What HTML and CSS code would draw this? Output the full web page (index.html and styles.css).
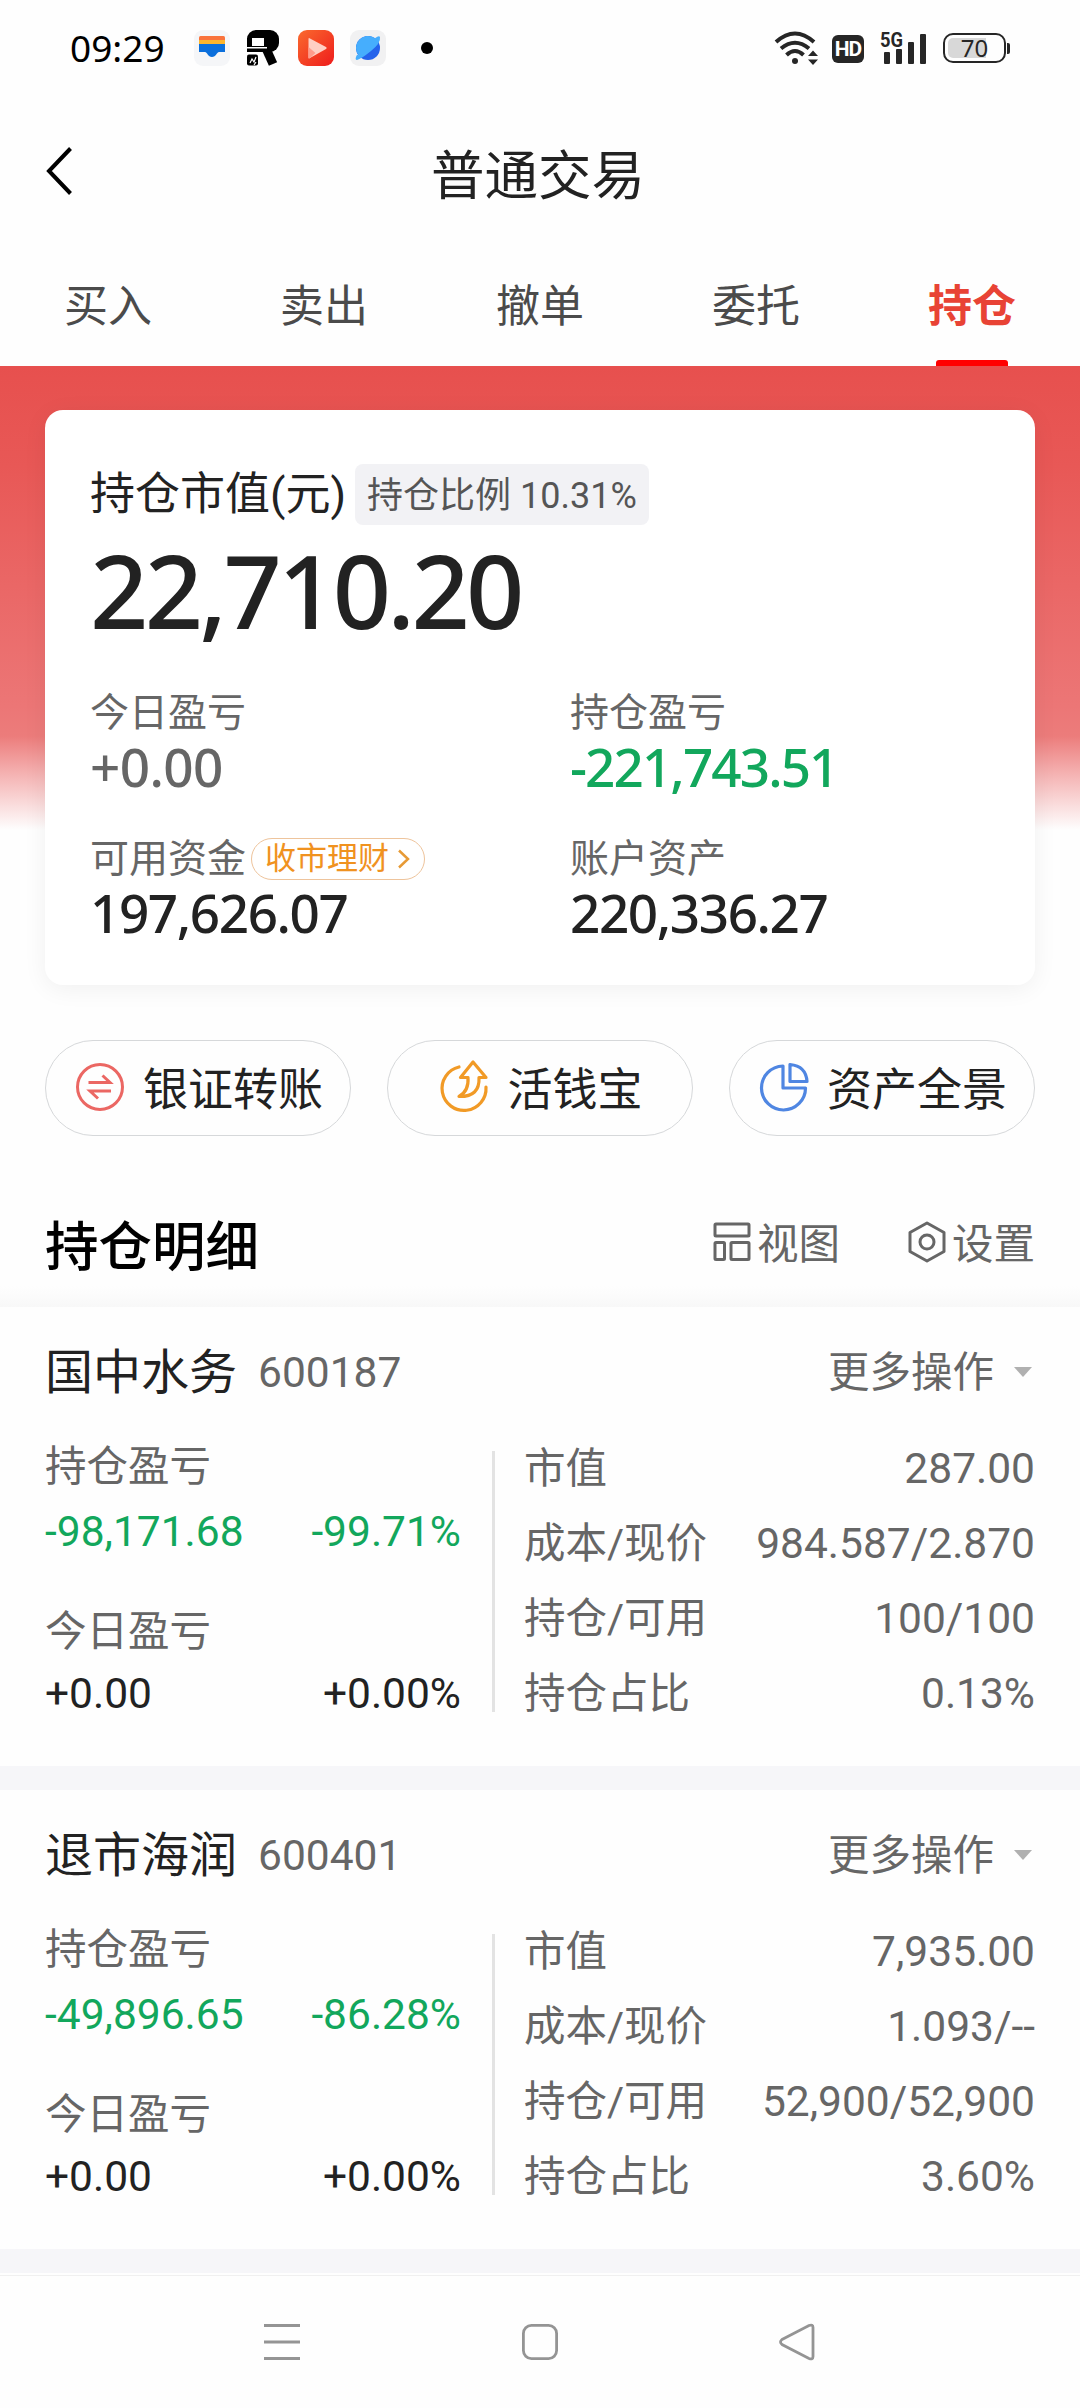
FILE: index.html
```html
<!DOCTYPE html>
<html lang="zh-CN">
<head>
  <meta charset="UTF-8" />
  <meta name="viewport" content="width=device-width, initial-scale=1">
  <title>普通交易</title>
  <link rel="stylesheet" href="styles.css">
</head>
<body>

  <div class="status-bar">
    <span class="clock">09:29</span>
    <div class="status-apps">
      <svg width="36" height="36" viewBox="0 0 36 36">
        <rect width="36" height="36" rx="9" fill="#f5f6f8"/>
        <rect x="5" y="6" width="26" height="8" rx="1.5" fill="#f9733c"/>
        <rect x="5" y="10" width="26" height="7" fill="#fdb52c"/>
        <path d="M5 14h26v8h-6c-2 0-3 5-7 5s-5-5-7-5H5z" fill="#0b6fdc"/>
      </svg>
      <svg class="app-r" width="34" height="36" viewBox="0 0 34 36">
        <rect x="1" y="0" width="32" height="22" rx="9" fill="#000"/>
        <rect x="1" y="8" width="14" height="14" fill="#000"/>
        <line x1="18" y1="14" x2="27" y2="34" stroke="#000" stroke-width="9" stroke-linecap="butt"/>
        <rect x="6" y="8" width="12" height="8" fill="#fff"/>
        <rect x="1" y="17" width="20" height="1.500" fill="#fff"/>
        <rect x="0" y="22" width="15" height="2.500" fill="#fff"/>
        <rect x="1" y="24.500" width="11" height="11" rx="2" fill="#000"/>
        <path d="M4 33l2-4 2 3 2-5M8 35l2-3" stroke="#fff" stroke-width="1.200" fill="none"/>
      </svg>
      <svg width="36" height="36" viewBox="0 0 36 36">
        <defs>
          <linearGradient id="video" x1="0" y1="0" x2="1" y2="1">
            <stop offset="0" stop-color="#fa6a2e"/>
            <stop offset="1" stop-color="#ee1c1c"/>
          </linearGradient>
        </defs>
        <rect width="36" height="36" rx="9" fill="url(#video)"/>
        <path d="M10.500 9q0-1.500 1.500-.5L28 17q1.500 1 0 2L12 28q-1.500 1-1.500-.5z" fill="#ffcfc4"/>
        <path d="M10.500 17l7 6-5.500 5q-1.500 1-1.500-.5z" fill="#ff9c8c"/>
      </svg>
      <svg width="36" height="36" viewBox="0 0 36 36">
        <rect width="36" height="36" rx="9" fill="#f1f1f2"/>
        <circle cx="18" cy="18" r="12" fill="#2563eb"/>
        <path d="M9 26A12 12 0 0 1 25 8.300Q29 5 30 7q1 6-9 14T7 30q-2 0-1-3 1-3 2-2z" fill="#46aefd"/>
      </svg>
      <i class="more-dot"></i>
    </div>
    <div class="status-right">
      <svg class="wifi" width="46" height="34" viewBox="0 0 46 34">
        <g fill="none" stroke="#262626" stroke-width="4">
          <path d="M2 11Q21-6 40 11"/>
          <path d="M7 17.500Q21 6 35 17.500"/>
          <path d="M12.500 24Q21 16 29.500 24"/>
        </g>
        <circle cx="21" cy="30" r="3" fill="#262626"/>
        <path d="M34 25l5-5.500 5 5.500zM34 28.500h10L39 34z" fill="#262626"/>
      </svg>
      <span class="hd">HD</span>
      <svg class="signal" width="50" height="34" viewBox="0 0 50 34">
        <text x="1" y="16" textLength="23" lengthAdjust="spacingAndGlyphs">5G</text>
        <rect x="5" y="21" width="6" height="12" rx="1"/>
        <rect x="17" y="18" width="6" height="15" rx="1"/>
        <rect x="29" y="11" width="6" height="22" rx="1"/>
        <rect x="41" y="3" width="6" height="30" rx="1"/>
      </svg>
      <span class="battery">70</span>
      <i class="battery-tip"></i>
    </div>
  </div>

  <div class="header">
    <svg class="back" width="30" height="50" viewBox="0 0 30 50">
      <path d="M25.500 2.500L4 25l21.500 22.500" fill="none" stroke="#000" stroke-width="4"/>
    </svg>
    <h1>普通交易</h1>
  </div>

  <div class="tabs">
    <div class="tab">买入</div>
    <div class="tab">卖出</div>
    <div class="tab">撤单</div>
    <div class="tab">委托</div>
    <div class="tab active">持仓</div>
  </div>

  <div class="hero">
    <div class="card">
      <div class="card-title">
        <span>持仓市值(元)</span>
        <span class="ratio">持仓比例 10.31%</span>
      </div>
      <div class="total">22,710.20</div>
      <div class="stats">
        <div class="stat">
          <div class="stat-label">今日盈亏</div>
          <div class="stat-value gray">+0.00</div>
        </div>
        <div class="stat">
          <div class="stat-label">持仓盈亏</div>
          <div class="stat-value green">-221,743.51</div>
        </div>
        <div class="stat">
          <div class="stat-label">可用资金
            <span class="tag">收市理财
              <svg width="14" height="20" viewBox="0 0 14 20">
                <path d="M2 1.500l9 8.500-9 8.500" fill="none" stroke="#e79a35" stroke-width="2.500"/>
              </svg>
            </span>
          </div>
          <div class="stat-value">197,626.07</div>
        </div>
        <div class="stat">
          <div class="stat-label">账户资产</div>
          <div class="stat-value">220,336.27</div>
        </div>
      </div>
    </div>
  </div>

  <div class="actions">
    <div class="action">
      <svg width="50" height="54" viewBox="0 0 50 54" fill="none" stroke="#eb6763" stroke-width="3">
        <circle cx="25" cy="27" r="22.500"/>
        <path d="M13.500 22.500H35l-7.500-7M36 31H15l8 7.500"/>
      </svg>
      <span>银证转账</span>
    </div>
    <div class="action">
      <svg width="50" height="54" viewBox="0 0 50 54" fill="none" stroke="#f19a26" stroke-width="3.200" stroke-linejoin="round" stroke-linecap="round">
        <path d="M20 7A22 22 0 1 0 47 27"/>
        <path d="M34 2L21.500 17.500H29Q30 31 20 36.500 41 37 40 17.500h7z"/>
      </svg>
      <span>活钱宝</span>
    </div>
    <div class="action">
      <svg width="50" height="54" viewBox="0 0 50 54" fill="none" stroke="#4f86e2" stroke-width="3.200" stroke-linejoin="round">
        <path d="M24 6A22 22 0 1 0 46.500 28H24z"/>
        <path d="M31 4.500V21.500H48Q47 6 31 4.500z"/>
      </svg>
      <span>资产全景</span>
    </div>
  </div>

  <div class="section-head">
    <h2>持仓明细</h2>
    <div class="tool">
      <svg width="38" height="40" viewBox="0 0 38 40" fill="none" stroke="#666" stroke-width="3">
        <rect x="2" y="2" width="34" height="12" rx="1"/>
        <rect x="2" y="20.500" width="9.500" height="17" rx="1"/>
        <rect x="18" y="20.500" width="18" height="17" rx="1"/>
      </svg>
      <span>视图</span>
    </div>
    <div class="tool">
      <svg width="38" height="42" viewBox="0 0 38 42" fill="none" stroke="#666" stroke-width="3" stroke-linejoin="round">
        <path d="M19 2L36 11.500v19L19 40 2 30.500v-19z"/>
        <circle cx="19" cy="21" r="7"/>
      </svg>
      <span>设置</span>
    </div>
  </div>

  <div class="holding">
    <div class="holding-head">
      <span class="name">国中水务</span>
      <span class="code">600187</span>
      <span class="more">更多操作</span>
      <i class="caret"></i>
    </div>
    <div class="holding-body">
      <div class="profit">
        <div class="line">持仓盈亏</div>
        <div class="line nums green"><span>-98,171.68</span><span>-99.71%</span></div>
        <div class="line today">今日盈亏</div>
        <div class="line nums dark"><span>+0.00</span><span>+0.00%</span></div>
      </div>
      <div class="detail">
        <div class="line"><span>市值</span><span>287.00</span></div>
        <div class="line"><span>成本/现价</span><span>984.587/2.870</span></div>
        <div class="line"><span>持仓/可用</span><span>100/100</span></div>
        <div class="line"><span>持仓占比</span><span>0.13%</span></div>
      </div>
    </div>
  </div>

  <div class="holding">
    <div class="holding-head">
      <span class="name">退市海润</span>
      <span class="code">600401</span>
      <span class="more">更多操作</span>
      <i class="caret"></i>
    </div>
    <div class="holding-body">
      <div class="profit">
        <div class="line">持仓盈亏</div>
        <div class="line nums green"><span>-49,896.65</span><span>-86.28%</span></div>
        <div class="line today">今日盈亏</div>
        <div class="line nums dark"><span>+0.00</span><span>+0.00%</span></div>
      </div>
      <div class="detail">
        <div class="line"><span>市值</span><span>7,935.00</span></div>
        <div class="line"><span>成本/现价</span><span>1.093/--</span></div>
        <div class="line"><span>持仓/可用</span><span>52,900/52,900</span></div>
        <div class="line"><span>持仓占比</span><span>3.60%</span></div>
      </div>
    </div>
  </div>

  <div class="nav-bar">
    <svg width="40" height="40" viewBox="0 0 40 40" fill="none" stroke="#949494" stroke-width="3">
      <path d="M2 3.500h36M2 20h36M2 36.500h36"/>
    </svg>
    <svg width="40" height="40" viewBox="0 0 40 40" fill="none" stroke="#949494" stroke-width="2.800">
      <rect x="3.400" y="3.400" width="33.200" height="33.200" rx="8"/>
    </svg>
    <svg width="40" height="40" viewBox="0 0 40 40" fill="none" stroke="#949494" stroke-width="2.800">
      <path d="M4 17.500L31 3.500q4-1.500 4 2v29q0 3.500-4 2L4 22.500q-3-2.500 0-5z"/>
    </svg>
  </div>

</body>
</html>
```

FILE: styles.css
```css
html, body {
  margin: 0;
  padding: 0;
}

body {
  width: 1080px;
  height: 2408px;
  overflow: hidden;
  background: #fefefe;
  color: #222;
  font-family: Roboto, "Noto Sans CJK SC", sans-serif;
}

svg {
  display: block;
  flex: none;
  overflow: visible;
}

h1, h2 {
  margin: 0;
}

/* status bar */

.status-bar {
  display: flex;
  align-items: center;
  height: 96px;
  padding-left: 70px;
  padding-right: 70px;
}

.clock {
  width: 124px;
  font-family: "Noto Sans", sans-serif;
  font-size: 37px;
  line-height: 44px;
  color: #000;
}

.status-apps {
  display: flex;
  align-items: center;
  gap: 16px;
}

.app-r {
  margin-right: 2px;
}

.more-dot {
  width: 12px;
  height: 12px;
  margin-left: 19px;
  border-radius: 50%;
  background: #000;
}

.status-right {
  display: flex;
  align-items: center;
  margin-left: auto;
  color: #262626;
}

.wifi {
  margin-right: 12px;
}

.hd {
  width: 32px;
  height: 28px;
  margin-right: 15px;
  border-radius: 6px;
  background: #262626;
  color: #fff;
  font-size: 21px;
  font-weight: bold;
  line-height: 29px;
  text-align: center;
  letter-spacing: -1px;
  margin-top: 2px;
}

.signal {
  margin-right: 14px;
  fill: #262626;
  font-size: 21px;
  font-weight: bold;
}

.battery {
  box-sizing: border-box;
  width: 63px;
  height: 30px;
  border: 2px solid #262626;
  border-radius: 10px;
  background: linear-gradient(90deg, #d8d8d8 38px, #fefefe 38px) content-box;
  padding: 3px;
  font-family: "Noto Sans", sans-serif;
  font-size: 24px;
  line-height: 20px;
  text-align: center;
}

.battery-tip {
  width: 3px;
  height: 11px;
  margin-left: 1px;
  background: #262626;
  border-radius: 0 2px 2px 0;
}

/* page header */

.header {
  display: flex;
  align-items: center;
  height: 150px;
}

.back {
  margin-left: 45px;
}

.header h1 {
  flex: 1;
  margin: 11px 79px 0 0;
  font-size: 53.5px;
  font-weight: 400;
  line-height: 64px;
  text-align: center;
}

.tabs {
  display: flex;
  height: 120px;
}

.tab {
  display: flex;
  flex-direction: column;
  align-items: center;
  justify-content: space-between;
  flex: 1;
  padding-top: 8px;
  font-size: 44px;
  line-height: 106px;
  color: #4b4b4b;
}

.tab.active {
  color: #e84335;
  font-weight: 600;
}

.tab.active::after {
  content: "";
  width: 72px;
  height: 6px;
  border-radius: 3px 3px 0 0;
  background: #f00;
}

/* summary card */

.hero {
  padding: 44px 45px 55px;
  background: linear-gradient(#e7504e, #e85856 100px, #ec7676 340px, #ec7c7b 370px, #f5b5b5 410px, #fefefe 464px);
}

.card {
  box-sizing: border-box;
  height: 575px;
  padding: 54px 45px 0;
  border-radius: 18px;
  background: #fff;
  box-shadow: 0 4px 24px rgba(0, 0, 0, 0.06);
}

.card-title {
  display: flex;
  align-items: center;
  gap: 9px;
  height: 61px;
  font-size: 45px;
}

.card-title span {
  line-height: 67px;
  white-space: nowrap;
}

.card-title .ratio {
  height: 61px;
  padding: 0 12px;
  border-radius: 8px;
  background: #f2f2f5;
  color: #555;
  font-size: 36px;
  line-height: 65px;
}

.total {
  margin-top: 10px;
  font-family: "Noto Sans", sans-serif;
  font-size: 102px;
  font-weight: 500;
  line-height: 110px;
  letter-spacing: -3.7px;
}

.stats {
  display: grid;
  grid-template-columns: 480px 1fr;
  row-gap: 42px;
  margin-top: 46px;
}

.stat-label {
  display: flex;
  align-items: center;
  height: 44px;
  color: #666;
  font-size: 39px;
  line-height: 44px;
}

.stat-value {
  margin-top: 4px;
  font-family: "Noto Sans", sans-serif;
  font-size: 53px;
  font-weight: 500;
  line-height: 56px;
  letter-spacing: -1.4px;
}

.stat-value.gray {
  color: #666;
  letter-spacing: -0.6px;
}

.stat-value.green {
  color: #12a75c;
  letter-spacing: -1.9px;
}

.tag {
  display: flex;
  align-items: center;
  gap: 8px;
  box-sizing: border-box;
  width: 174px;
  height: 42px;
  margin-left: 5px;
  padding-left: 13px;
  border: 1px solid #eec49c;
  border-radius: 21px;
  color: #f0921f;
  font-size: 31px;
  line-height: 40px;
}

/* quick actions */

.actions {
  display: flex;
  gap: 36px;
  padding: 0 45px;
}

.action {
  display: flex;
  align-items: center;
  justify-content: center;
  gap: 18px;
  flex: 1;
  box-sizing: border-box;
  height: 96px;
  padding-left: 2px;
  border: 1px solid #d6d8da;
  border-radius: 48px;
  font-size: 45px;
  line-height: 60px;
  white-space: nowrap;
}

.action svg {
  margin-top: -3px;
}

.action span {
  padding-top: 5px;
}

/* holdings */

.section-head {
  display: flex;
  align-items: center;
  box-sizing: border-box;
  height: 171px;
  padding: 41px 45px 0;
  background: linear-gradient(#fefefe 150px, #f8f8f8 171px);
}

.section-head h2 {
  margin-right: auto;
  color: #000;
  font-size: 53.5px;
  font-weight: 500;
}

.tool {
  display: flex;
  align-items: center;
  gap: 6px;
  margin-left: 68px;
  color: #666;
  font-size: 41.5px;
}

.tool span {
  margin-top: -2px;
}

.holding {
  box-sizing: border-box;
  height: 483px;
  padding: 35px 45px 0;
  border-bottom: 24px solid #f6f6f9;
  color: #666;
  font-size: 41.5px;
}

.holding-head {
  display: flex;
  align-items: center;
  height: 60px;
  line-height: 61px;
}

.name {
  color: #222;
  font-size: 48px;
}

.code {
  margin-left: 21px;
  font-size: 42.5px;
}

.more {
  margin-left: auto;
}

.caret {
  margin: 0 3px 0 20px;
  border: 9px solid transparent;
  border-top: 10px solid #b0b0b0;
  border-bottom: 0;
}

.holding-body {
  display: flex;
  margin-top: 40px;
}

.line {
  display: flex;
  justify-content: space-between;
  height: 50px;
  line-height: 50px;
}

.profit {
  width: 416px;
}

.profit .nums {
  margin-top: 15px;
  font-size: 42.5px;
}

.profit .today {
  margin-top: 50px;
}

.profit .today + .nums {
  margin-top: 12px;
}

.green {
  color: #12a75c;
}

.dark {
  color: #222;
}

.detail {
  display: flex;
  flex-direction: column;
  gap: 25px;
  flex: 1;
  padding: 2px 0 0 32px;
  margin-left: 31px;
  background: linear-gradient(#e3e3e3, #e3e3e3) 0 9px / 3px 261px no-repeat;
}

.detail span:last-child {
  font-size: 42.5px;
}

/* system navigation */

.nav-bar {
  display: flex;
  align-items: center;
  justify-content: center;
  gap: 218px;
  box-sizing: border-box;
  height: 133px;
  margin-top: 2px;
  border-top: 1px solid #f0f0f0;
}
```
